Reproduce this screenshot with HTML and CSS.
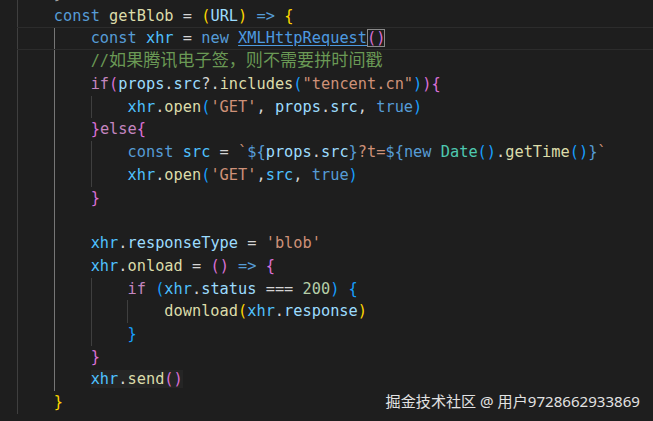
FILE: index.html
```html
<!DOCTYPE html>
<html lang="zh">
<head>
<meta charset="utf-8">
<title>getBlob</title>
<link rel="stylesheet" href="styles.css">
</head>
<body>
<div class="editor">
  <div class="line"><span class="ind g"></span><span class="code"><span class="p">}</span></span></div>
  <div class="line"><span class="ind g"></span><span class="code"><span class="k">const</span> <span class="f">getBlob</span> = <span class="b1">(</span><span class="v">URL</span><span class="b1">)</span> <span class="k">=&gt;</span> <span class="b1">{</span></span></div>
  <div class="line cur"><span class="ind g"></span><span class="ind ga"></span><span class="code"><span class="k">const</span> <span class="c">xhr</span> = <span class="k">new</span> <span class="lnk">XMLHttpRequest</span><span class="b2 match">()</span></span></div>
  <div class="line"><span class="ind g"></span><span class="ind ga"></span><span class="code"><span class="cm">//<span class="cjk">如果腾讯电子签，则不需要拼时间戳</span></span></span></div>
  <div class="line"><span class="ind g"></span><span class="ind ga"></span><span class="code"><span class="ctl">if</span><span class="b2">(</span><span class="v">props</span>.<span class="v">src</span>?.<span class="f">includes</span><span class="b3">(</span><span class="s">"tencent.cn"</span><span class="b3">)</span><span class="b2">){</span></span></div>
  <div class="line"><span class="ind g"></span><span class="ind ga"></span><span class="ind g"></span><span class="code"><span class="c">xhr</span>.<span class="f">open</span><span class="b3">(</span><span class="s">'GET'</span>, <span class="v">props</span>.<span class="v">src</span>, <span class="k">true</span><span class="b3">)</span></span></div>
  <div class="line"><span class="ind g"></span><span class="ind ga"></span><span class="code"><span class="b2">}</span><span class="ctl">else</span><span class="b2">{</span></span></div>
  <div class="line"><span class="ind g"></span><span class="ind ga"></span><span class="ind g"></span><span class="code"><span class="k">const</span> <span class="c">src</span> = <span class="s">`</span><span class="k">${</span><span class="v">props</span>.<span class="v">src</span><span class="k">}</span><span class="s">?t=</span><span class="k">${new</span> <span class="t">Date</span><span class="b3">()</span>.<span class="f">getTime</span><span class="b3">()</span><span class="k">}</span><span class="s">`</span></span></div>
  <div class="line"><span class="ind g"></span><span class="ind ga"></span><span class="ind g"></span><span class="code"><span class="c">xhr</span>.<span class="f">open</span><span class="b3">(</span><span class="s">'GET'</span>,<span class="c">src</span>, <span class="k">true</span><span class="b3">)</span></span></div>
  <div class="line"><span class="ind g"></span><span class="ind ga"></span><span class="code"><span class="b2">}</span></span></div>
  <div class="line"><span class="ind g"></span><span class="ind ga"></span><span class="code"></span></div>
  <div class="line"><span class="ind g"></span><span class="ind ga"></span><span class="code"><span class="c">xhr</span>.<span class="v">responseType</span> = <span class="s">'blob'</span></span></div>
  <div class="line"><span class="ind g"></span><span class="ind ga"></span><span class="code"><span class="c">xhr</span>.<span class="f">onload</span> = <span class="b2">()</span> <span class="k">=&gt;</span> <span class="b2">{</span></span></div>
  <div class="line"><span class="ind g"></span><span class="ind ga"></span><span class="ind g"></span><span class="code"><span class="ctl">if</span> <span class="b3">(</span><span class="c">xhr</span>.<span class="v">status</span> === <span class="n">200</span><span class="b3">)</span> <span class="b3">{</span></span></div>
  <div class="line"><span class="ind g"></span><span class="ind ga"></span><span class="ind g"></span><span class="ind g"></span><span class="code"><span class="f">download</span><span class="b1">(</span><span class="c">xhr</span>.<span class="v">response</span><span class="b1">)</span></span></div>
  <div class="line"><span class="ind g"></span><span class="ind ga"></span><span class="ind g"></span><span class="code"><span class="b3">}</span></span></div>
  <div class="line"><span class="ind g"></span><span class="ind ga"></span><span class="code"><span class="b2">}</span></span></div>
  <div class="line"><span class="ind g"></span><span class="ind ga"></span><span class="code"><span class="hl"><span class="c">xhr</span>.<span class="f">send</span><span class="b2">()</span></span></span></div>
  <div class="line"><span class="ind g"></span><span class="code"><span class="b1">}</span></span></div>
  <div class="line"><span class="code"></span></div>
</div>
<div class="watermark">掘金技术社区 @ 用户9728662933869</div>
</body>
</html>
```
FILE: styles.css
```css
html, body {
  margin: 0;
  padding: 0;
  background: #1e1e1e;
  width: 653px;
  height: 421px;
  overflow: hidden;
}
body {
  position: relative;
}
.editor {
  margin-top: -18px;
  padding-left: 17px;
  font-family: "DejaVu Sans Mono", "Liberation Mono", monospace;
  font-size: 15.3px;
  color: #d4d4d4;
}
.line {
  display: flex;
  height: 22.74px;
  line-height: 22.74px;
  white-space: pre;
  box-sizing: border-box;
}
.line.cur {
  border-top: 1px solid #2c2c2c;
  border-bottom: 1px solid #2c2c2c;
  line-height: 20.74px;
}
.ind {
  width: 4ch;
  flex: none;
  box-sizing: border-box;
}
.ind.g { border-left: 1px solid #3f3f3f; }
.ind.ga { border-left: 1px solid #767676; }
.code { flex: 1; }
.k { color: #569cd6; }
.f { color: #dcdcaa; }
.v { color: #9cdcfe; }
.c { color: #4fc1ff; }
.s { color: #ce9178; }
.t { color: #4ec9b0; }
.p { color: #a0a0a0; }
.n { color: #b5cea8; }
.ctl { color: #c586c0; }
.cm { color: #6a9955; }
.b1 { color: #ffd700; }
.b2 { color: #da70d6; }
.b3 { color: #179fff; }
.lnk {
  color: #4d9ae0;
  text-decoration: underline;
  text-underline-offset: 2px;
}
.match {
  outline: 1px solid #8a8a8a;
  outline-offset: -1px;
}
.cjk {
  font-family: "Noto Sans CJK SC", sans-serif;
  font-size: 17.1px;
  line-height: 1;
}
.hl {
  background: #252525;
}
.watermark {
  position: absolute;
  right: 13px;
  bottom: 11px;
  font-family: "Noto Sans", "Noto Sans CJK SC", sans-serif;
  font-size: 15.1px;
  line-height: 18px;
  color: #e2e2e2;
}
```
